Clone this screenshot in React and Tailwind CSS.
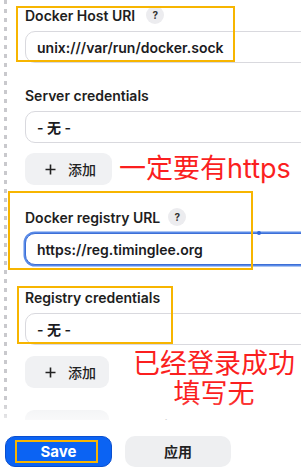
import React from 'react';

const Help = ({ gap }) => (
  <span
    className={`${gap} inline-flex h-[18px] w-[18px] items-center justify-center rounded-full bg-[#ececef] text-[10px] font-bold text-[#333]`}
  >
    ?
  </span>
);

const Field = ({ label, help, children }) => (
  <div>
    <div className="flex h-[20px] items-center text-[14px] font-semibold text-[#1e1e21]">
      {label}
      {help}
    </div>
    <div className="mt-[6px]">{children}</div>
  </div>
);

const Box = ({ children, focused }) => (
  <div
    className={
      focused
        ? 'flex h-[32px] w-[300px] items-center rounded-[10px] border border-[#3d6fd6] bg-white pl-[11px] text-[14px] font-semibold text-[#1b1b1e] ring-[1.5px] ring-[#5a8be8]'
        : 'flex h-[32px] w-[300px] items-center rounded-[10px] border border-[#d9d9de] bg-white pl-[11px] text-[14px] font-semibold text-[#1b1b1e]'
    }
  >
    {children}
  </div>
);

const AddButton = ({ width }) => (
  <button
    className={`${width} flex h-[32px] shrink-0 items-center rounded-[9px] bg-[#f0f1f3] pl-[20px] text-[14px] font-medium text-[#222]`}
  >
    <svg width="11" height="11" viewBox="0 0 11 11" fill="none" stroke="#222" strokeWidth="1.6">
      <path d="M5.5 0.5v10M0.5 5.5h10" />
    </svg>
    <span className="ml-[12px]">添加</span>
  </button>
);

export default function App() {
  return (
    <div className="relative flex h-[468px] w-[301px] flex-col overflow-hidden bg-white font-['Inter','Noto_Sans_CJK_SC',sans-serif]">
      <div className="relative flex h-[420px] shrink-0 overflow-hidden pl-[4px]">
        <div className="h-full w-[3px] shrink-0 bg-[repeating-linear-gradient(to_bottom,#c9c9cd_0_4px,transparent_4px_9px)]" />
        <div className="pl-[18px] pt-[5px]">
          <Field label="Docker Host URI" help={<Help gap="ml-[11px]" />}>
            <Box>unix:///var/run/docker.sock</Box>
          </Field>

          <div className="mt-[22px]">
            <Field label="Server credentials">
              <Box>- 无 -</Box>
            </Field>
          </div>

          <div className="mt-[10px] flex items-center">
            <AddButton width="w-[87px]" />
            <span className="ml-[7px] whitespace-nowrap text-[27px] leading-[30px] text-[#fb1f1f]">
              一定要有https
            </span>
          </div>

          <div className="mt-[22px]">
            <Field label="Docker registry URL" help={<Help gap="ml-[8px]" />}>
              <Box focused>https://reg.timinglee.org</Box>
            </Field>
          </div>

          <div className="mt-[22px]">
            <Field label="Registry credentials">
              <Box>- 无 -</Box>
            </Field>
          </div>

          <div className="mt-[11px] flex h-[32px] items-start">
            <AddButton width="w-[84px]" />
            <div className="relative z-10 ml-[24px] mt-[-7px] whitespace-nowrap text-center text-[27px] leading-[30px] text-[#fb1f1f]">
              <div>已经登录成功</div>
              <div>填写无</div>
            </div>
          </div>

          <div className="mt-[22px] flex items-center">
            <button className="flex h-[32px] w-[84px] items-center rounded-[9px] bg-[#f0f1f3] pl-[17px] text-[14px] font-medium text-[#222]">
              高级
              <svg className="ml-[12px]" width="9" height="6" viewBox="0 0 9 6" fill="none" stroke="#444" strokeWidth="1.4">
                <path d="M1 1l3.5 3.5L8 1" />
              </svg>
            </button>
            <span className="ml-[25px] text-[13px] text-[#777]">✎ Edited</span>
          </div>
        </div>
        <div className="absolute bottom-0 left-0 z-20 h-[20px] w-full bg-gradient-to-b from-white/0 to-white/60" />
      </div>

      <div className="flex h-[48px] shrink-0 items-start gap-[13px] bg-white pl-[5px] pt-[16px]">
        <button className="flex h-[31px] w-[107px] items-center justify-center rounded-[10px] border border-[#0a4fcf] bg-[#0b63f3] text-[15px] font-bold leading-none text-white">
          Save
        </button>
        <button className="flex h-[31px] w-[106px] items-center justify-center rounded-[10px] bg-[#eeeff1] text-[14px] font-semibold leading-none text-[#222]">
          应用
        </button>
      </div>

      {/* annotation overlays */}
      <div className="pointer-events-none absolute left-[16px] top-[6px] h-[56px] w-[219px] border-2 border-[#f7b500]" />
      <div className="pointer-events-none absolute left-[8px] top-[191px] h-[79px] w-[245px] border-2 border-[#f7b500]" />
      <div className="pointer-events-none absolute left-[17px] top-[286px] h-[58px] w-[156px] border-2 border-[#f7b500]" />
      <div className="pointer-events-none absolute left-[15px] top-[440px] h-[23px] w-[83px] border-2 border-[#f7b500]" />
      <div className="pointer-events-none absolute left-[257px] top-[231px] h-[4px] w-[4px] rounded-full bg-[#2f66d9]" />
    </div>
  );
}
